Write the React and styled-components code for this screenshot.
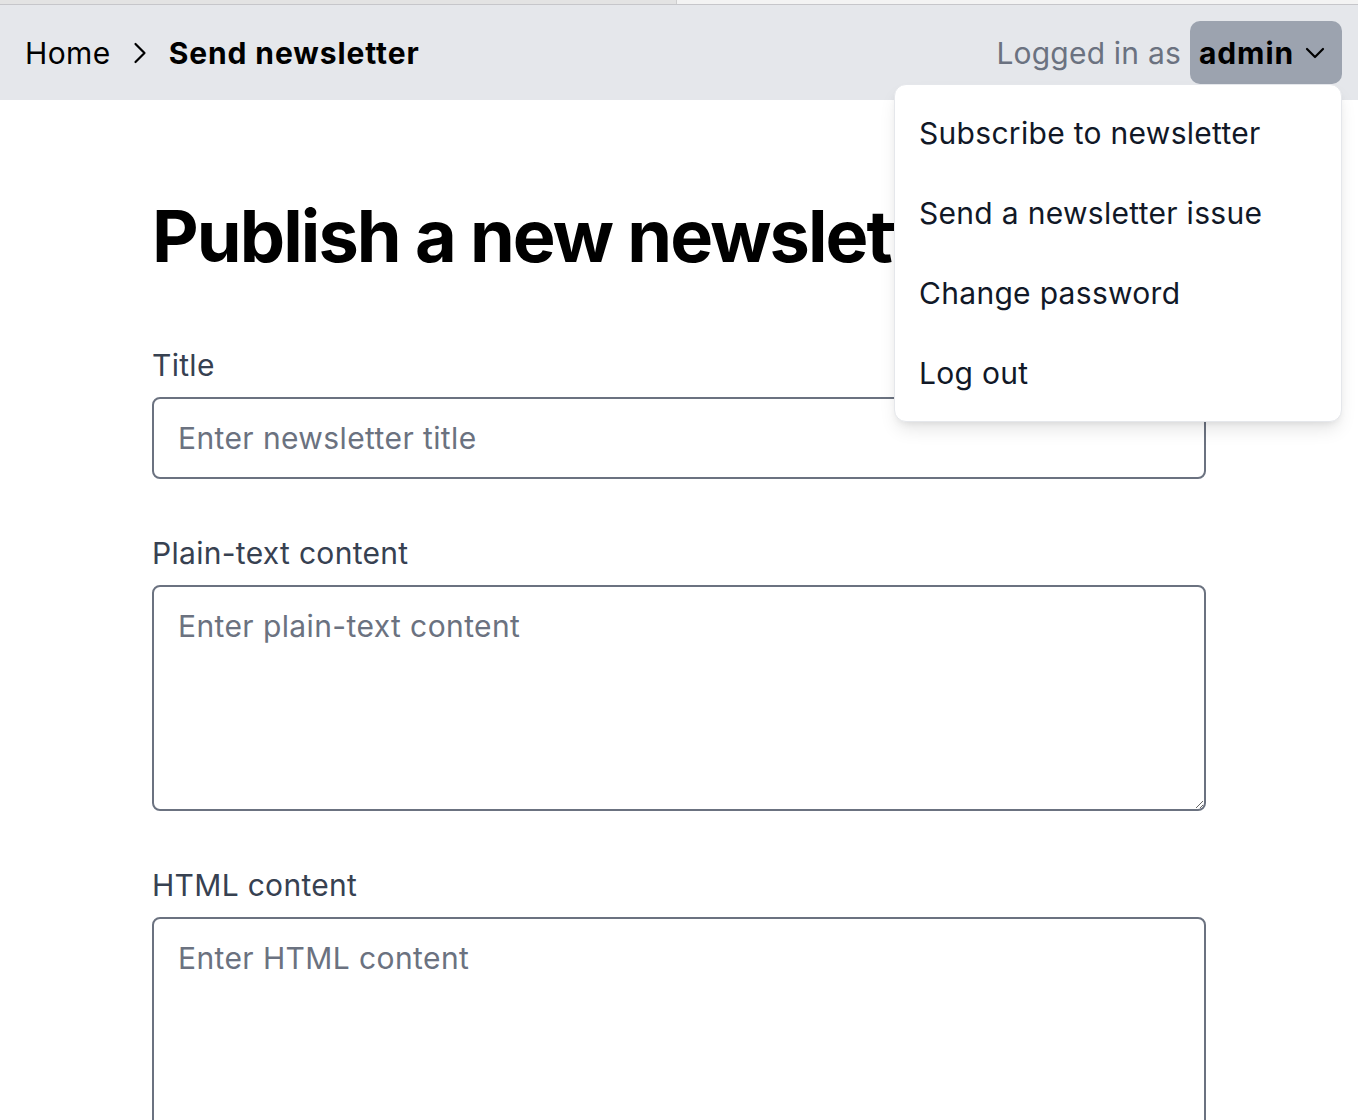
import React from "react";
import styled, { createGlobalStyle } from "styled-components";

const GlobalStyle = createGlobalStyle`
  * {
    box-sizing: border-box;
  }
  body {
    margin: 0;
    background: #fff;
    font-family: Inter, "Noto Sans", sans-serif;
    color: #000;
    overflow-x: hidden;
  }
`;

const TabStrip = styled.div`
  display: flex;
  height: 5px;
  border-bottom: 1px solid #c6c6ca;
`;

const TabPart = styled.div`
  height: 100%;
  background: ${(p) => (p.$active ? "#f3f3f3" : "#e3e3e3")};
  flex: ${(p) => (p.$active ? 1 : "0 0 677px")};
  border-right: ${(p) => (p.$active ? "none" : "1px solid #cfcfcf")};
`;

const NavBar = styled.nav`
  position: relative;
  display: flex;
  align-items: center;
  justify-content: space-between;
  height: 95px;
  padding: 0 16px 0 25px;
  background: #e5e7eb;
  font-size: 30px;
  line-height: 36px;
  letter-spacing: 0.2px;
`;

const Crumbs = styled.div`
  display: flex;
  align-items: center;
  gap: 22px;
`;

const Crumb = styled.span`
  font-weight: ${(p) => (p.$current ? 700 : 400)};
  letter-spacing: ${(p) => (p.$current ? "0.9px" : "0.4px")};
  color: #000;
`;

const UserArea = styled.div`
  position: relative;
  display: flex;
  align-items: center;
  gap: 9px;
`;

const LoggedIn = styled.span`
  color: #6b7280;
`;

const UserButton = styled.button`
  display: flex;
  align-items: center;
  gap: 11px;
  height: 63px;
  padding: 0 17px 0 9px;
  border: none;
  border-radius: 10px;
  background: #9ca3af;
  font-family: inherit;
  font-size: 30px;
  line-height: 36px;
  font-weight: 700;
  letter-spacing: 0.9px;
  color: #000;
`;

const Menu = styled.ul`
  position: absolute;
  top: 63px;
  right: 0;
  width: 448px;
  margin: 0;
  padding: 8px 0;
  list-style: none;
  background: #fff;
  border: 1px solid #e5e7eb;
  border-radius: 12px;
  box-shadow: 0 10px 18px -3px rgba(0, 0, 0, 0.1),
    0 4px 8px -4px rgba(0, 0, 0, 0.1);
  z-index: 10;
  letter-spacing: 0.3px;
`;

const MenuItem = styled.li`
  padding: 22px 24px;
  font-size: 30px;
  line-height: 36px;
  color: #111827;
  white-space: nowrap;
`;

const Main = styled.main`
  padding: 100px 152px 0;
`;

const Heading = styled.h1`
  margin: 0 0 75px;
  font-size: 72px;
  line-height: 72px;
  font-weight: 700;
  letter-spacing: -1.9px;
  white-space: nowrap;
`;

const Form = styled.form`
  display: flex;
  flex-direction: column;
  gap: 56px;
`;

const Field = styled.div`
  display: flex;
  flex-direction: column;
  gap: 14px;
`;

const Label = styled.label`
  font-size: 30px;
  line-height: 36px;
  letter-spacing: 0.3px;
  color: #374151;
`;

const fieldBase = `
  width: 100%;
  border: 2px solid #6b7280;
  border-radius: 8px;
  padding: 21px 24px;
  font-family: Inter, "Noto Sans", sans-serif;
  font-size: 30px;
  line-height: 36px;
  letter-spacing: 0.4px;
  color: #111827;
  background: #fff;
  outline: none;
  &::placeholder {
    color: #6b7280;
    opacity: 1;
  }
`;

const TextInput = styled.input`
  ${fieldBase}
  height: 82px;
`;

const TextArea = styled.textarea`
  ${fieldBase}
  display: block;
  height: ${(p) => p.$height}px;
  resize: vertical;
`;

function ChevronRight() {
  return (
    <svg width="14" height="22" viewBox="0 0 14 22" fill="none">
      <path d="M2.5 2 L11.5 11 L2.5 20" stroke="#000" strokeWidth="2.2" strokeLinecap="round" strokeLinejoin="round" />
    </svg>
  );
}

function ChevronDown() {
  return (
    <svg width="20" height="12" viewBox="0 0 20 12" fill="none">
      <path d="M2 2 L10 10 L18 2" stroke="#000" strokeWidth="2.2" strokeLinecap="round" strokeLinejoin="round" />
    </svg>
  );
}

const menuItems = [
  "Subscribe to newsletter",
  "Send a newsletter issue",
  "Change password",
  "Log out",
];

export default function App() {
  return (
    <>
      <GlobalStyle />
      <TabStrip>
        <TabPart />
        <TabPart $active />
      </TabStrip>
      <NavBar>
        <Crumbs>
          <Crumb>Home</Crumb>
          <ChevronRight />
          <Crumb $current>Send newsletter</Crumb>
        </Crumbs>
        <UserArea>
          <LoggedIn>Logged in as</LoggedIn>
          <UserButton type="button">
            admin
            <ChevronDown />
          </UserButton>
          <Menu>
            {menuItems.map((item) => (
              <MenuItem key={item}>{item}</MenuItem>
            ))}
          </Menu>
        </UserArea>
      </NavBar>
      <Main>
        <Heading>Publish a new newsletter issue</Heading>
        <Form>
          <Field>
            <Label>Title</Label>
            <TextInput placeholder="Enter newsletter title" />
          </Field>
          <Field>
            <Label>Plain-text content</Label>
            <TextArea $height={226} placeholder="Enter plain-text content" />
          </Field>
          <Field>
            <Label>HTML content</Label>
            <TextArea $height={226} placeholder="Enter HTML content" />
          </Field>
        </Form>
      </Main>
    </>
  );
}
